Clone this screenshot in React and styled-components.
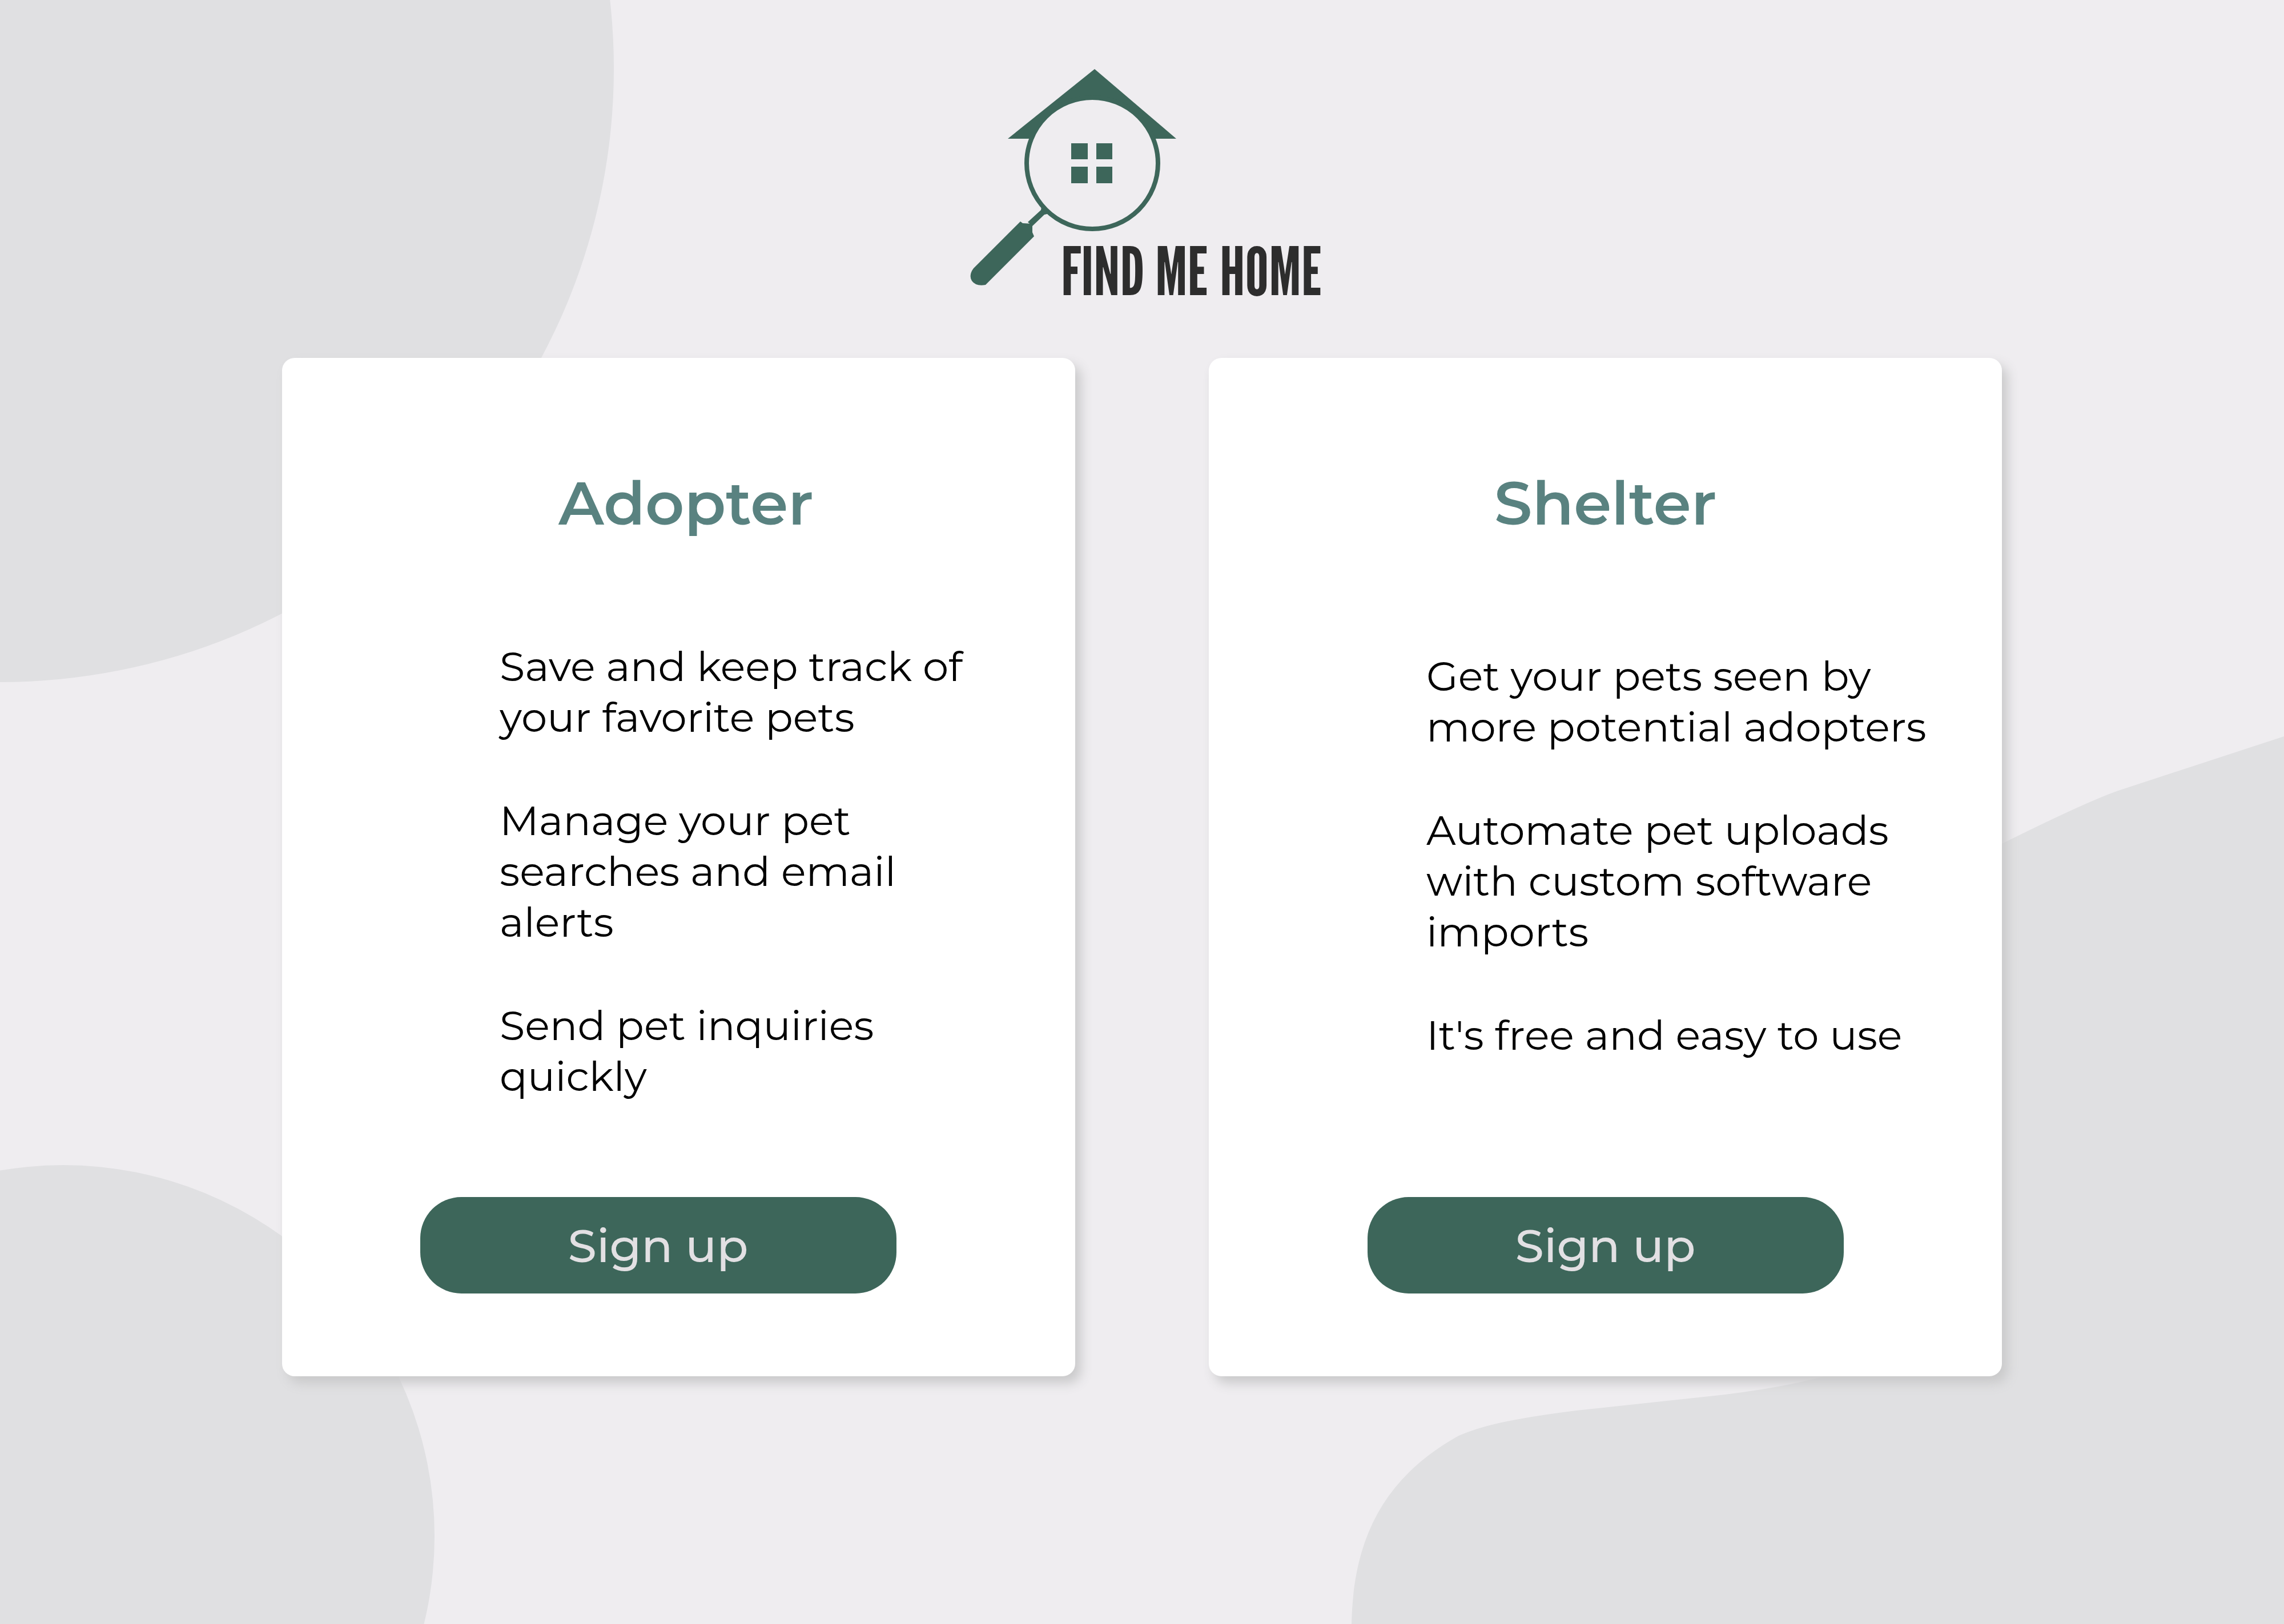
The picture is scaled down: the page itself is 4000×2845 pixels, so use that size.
import React from "react";
import styled, { createGlobalStyle } from "styled-components";

const colors = {
  page: "#efedf0",
  shape: "#e0e0e2",
  card: "#ffffff",
  shadow: "#c9c9ca",
  heading: "#598280",
  brand: "#3d665a",
  wordmark: "#2d2d2d",
  text: "#000000",
  buttonText: "#e2e0e3",
};

const GlobalStyle = createGlobalStyle`
  *, *::before, *::after { box-sizing: border-box; }
  body {
    margin: 0;
    background: ${colors.page};
    color: ${colors.text};
    font-family: Montserrat, Inter, "Open Sans", sans-serif;
  }
`;

const Page = styled.div`
  position: relative;
  min-height: 100vh;
  overflow: hidden;
`;

const Backdrop = styled.svg`
  position: absolute;
  inset: 0;
  width: 100%;
  height: 100%;
  fill: ${colors.shape};
`;

const Content = styled.main`
  position: relative;
  display: flex;
  flex-direction: column;
  align-items: center;
  gap: 46px;
  padding: 121px 40px;
`;

const LogoArt = styled.svg`
  display: block;
  width: 640px;
  height: 460px;
  max-width: 100%;
  overflow: visible;
`;

const Wordmark = styled.text`
  fill: ${colors.wordmark};
  font-family: "League Gothic", "Bebas Neue", "Roboto Condensed", "Liberation Sans Narrow", sans-serif;
  font-size: 117px;
  font-weight: 400;
`;

const Cards = styled.div`
  display: flex;
  gap: 234px;
  width: 100%;
  max-width: 3012px;
`;

const Card = styled.section`
  flex: 1;
  display: flex;
  flex-direction: column;
  align-items: center;
  padding: 190px 0 145px;
  border-radius: 22px;
  background: ${colors.card};
  box-shadow: 10px 12px 20px ${colors.shadow};
`;

const Title = styled.h2`
  margin: 0;
  padding-left: ${(p) => p.$shift}px;
  color: ${colors.heading};
  font-size: 106px;
  font-weight: 600;
  line-height: 128px;
`;

const Benefits = styled.ul`
  align-self: stretch;
  display: flex;
  flex-direction: column;
  gap: 92px;
  margin: 0 0 0 381px;
  padding: ${(p) => p.$top}px 0 167px;
  list-style: none;
  font-size: 72px;
  line-height: 89px;
`;

const Benefit = styled.li`
  max-width: 900px;
`;

const SignUp = styled.button`
  width: 834px;
  height: 169px;
  margin: auto ${(p) => p.$right}px 0 0;
  border: 0;
  border-radius: 72px;
  background: ${colors.brand};
  color: ${colors.buttonText};
  font: inherit;
  font-size: 81px;
  font-weight: 500;
  cursor: pointer;
`;

const plans = [
  {
    title: "Adopter",
    titleShift: 26,
    listTop: 178,
    buttonRight: 72,
    benefits: [
      "Save and keep track of your favorite pets",
      "Manage your pet searches and email alerts",
      "Send pet inquiries quickly",
    ],
  },
  {
    title: "Shelter",
    titleShift: 0,
    listTop: 195,
    buttonRight: 0,
    benefits: [
      "Get your pets seen by more potential adopters",
      "Automate pet uploads with custom software imports",
      "It's free and easy to use",
    ],
  },
];

function Logo() {
  return (
    <LogoArt viewBox="1680 121 640 460" role="img" aria-label="Find Me Home">
      <g fill={colors.brand}>
        <path d="M1917 121 L2060 243 H1765 Z" />
        <circle cx="1913" cy="286" r="115" fill={colors.page} stroke={colors.brand} strokeWidth="8" />
        <path d="M1876 251h29v28h-29z M1920 251h28v28h-28z M1876 292h29v29h-29z M1920 292h28v29h-28z" />
        <path d="M1824 362 L1838 374 L1829 376 L1808 396 L1800 389 L1823 368 Z" />
        <path d="M1787 388 L1705 470 Q1696 482 1702 492 Q1709 502 1726 499 L1811 414 L1808 407 V392 L1791 391 Z" />
      </g>
      <Wordmark x="1858" y="517">FIND ME HOME</Wordmark>
    </LogoArt>
  );
}

export default function App() {
  return (
    <Page>
      <GlobalStyle />
      <Backdrop viewBox="0 0 4000 2845" preserveAspectRatio="none" aria-hidden="true">
        <circle cx="0" cy="120" r="1075" />
        <circle cx="111" cy="2691" r="650" />
        <path d="M4000 1290 L3710 1385 Q3650 1406 3490 1486 L3300 1700 V2380 Q3200 2412 3135 2425 Q3070 2438 2994 2446 L2761 2471 Q2680 2481 2625 2493 Q2585 2502 2555 2515 C2420 2590 2370 2700 2367 2845 H4000 Z" />
      </Backdrop>
      <Content>
        <Logo />
        <Cards>
          {plans.map((plan) => (
            <Card key={plan.title}>
              <Title $shift={plan.titleShift}>{plan.title}</Title>
              <Benefits $top={plan.listTop}>
                {plan.benefits.map((benefit) => (
                  <Benefit key={benefit}>{benefit}</Benefit>
                ))}
              </Benefits>
              <SignUp type="button" $right={plan.buttonRight}>Sign up</SignUp>
            </Card>
          ))}
        </Cards>
      </Content>
    </Page>
  );
}
